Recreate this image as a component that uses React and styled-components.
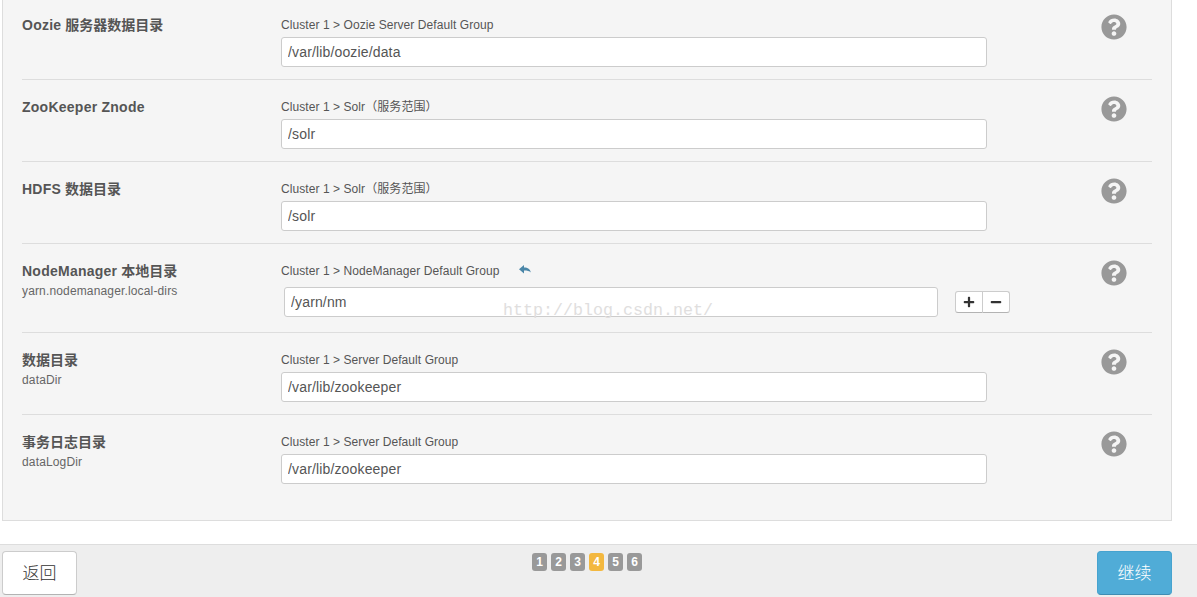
import React from "react";
import styled, { createGlobalStyle } from "styled-components";
import { FaQuestionCircle, FaPlus, FaMinus } from "react-icons/fa";

const GlobalStyle = createGlobalStyle`
  html, body {
    margin: 0;
    padding: 0;
    background: #fff;
    font-family: "Liberation Sans", "Noto Sans CJK SC", sans-serif;
    color: #555;
  }
`;

const Page = styled.div`
  position: relative;
  width: 1197px;
  height: 597px;
  overflow: hidden;
`;

const Panel = styled.div`
  box-sizing: border-box;
  width: 1170px;
  height: 521px;
  margin: 0 0 23px 2px;
  padding: 0 19px;
  background: #f5f5f5;
  border: 1px solid #ddd;
  border-top: none;
`;

const Row = styled.div`
  display: grid;
  grid-template-columns: 259px 820px 1fr;
  padding-top: ${(p) => (p.$first ? "15px" : "17px")};
  padding-bottom: 12px;
  border-bottom: ${(p) => (p.$last ? "none" : "1px solid #ddd")};
`;

const LabelCol = styled.div`
  line-height: 20px;
`;

const Label = styled.div`
  font-size: 14px;
  font-weight: bold;
  color: #555;
`;

const LatinPart = styled.span`
  letter-spacing: 0.25px;
`;

const SubLabel = styled.div`
  margin-top: 2px;
  font-size: 12px;
  line-height: 16px;
  letter-spacing: 0.15px;
  color: #666;
`;

const FieldCol = styled.div`
  min-width: 0;
`;

const Scope = styled.div`
  height: 20px;
  margin-bottom: 2px;
  font-size: 12px;
  line-height: 20px;
  letter-spacing: 0.07px;
  color: #555;
`;

const UndoIcon = styled.svg`
  display: inline-block;
  width: 12px;
  height: 10px;
  margin-left: 20px;
  vertical-align: 0;
  fill: #4a86a8;
`;

const TextInput = styled.input`
  display: block;
  box-sizing: border-box;
  width: ${(p) => p.$width}px;
  height: 30px;
  padding: 0 6px;
  background: #fff;
  border: 1px solid #ccc;
  border-radius: 3px;
  font-family: inherit;
  font-size: 14px;
  letter-spacing: 0.15px;
  color: #555;
  outline: none;
`;

const MultiField = styled.div`
  display: flex;
  align-items: center;
  padding: 4px 0 3px 3px;
`;

const ButtonGroup = styled.div`
  display: flex;
  margin-left: 17px;
`;

const SmallButton = styled.div`
  box-sizing: border-box;
  display: flex;
  align-items: center;
  justify-content: center;
  width: 28px;
  height: 22px;
  margin-left: ${(p) => (p.$left ? "0" : "-1px")};
  background: #fff;
  border: 1px solid #ccc;
  border-bottom-color: #b3b3b3;
  border-radius: ${(p) => (p.$left ? "3px 0 0 3px" : "0 3px 3px 0")};
  font-size: 12px;
  color: #333;
`;

const HelpIcon = styled(FaQuestionCircle)`
  display: block;
  margin-top: -1px;
  font-size: 26px;
  color: #999;
`;

const Footer = styled.div`
  box-sizing: border-box;
  display: flex;
  justify-content: space-between;
  align-items: flex-start;
  height: 53px;
  padding: 6px 25px 0 2px;
  background: #eee;
  border-top: 1px solid #ddd;
`;

const NavButton = styled.div`
  box-sizing: border-box;
  display: flex;
  align-items: center;
  justify-content: center;
  width: 75px;
  height: 44px;
  padding-bottom: 3px;
  background: ${(p) => (p.$primary ? "#50acd7" : "#fff")};
  border: 1px solid ${(p) => (p.$primary ? "#46a3cf" : "#ccc")};
  border-bottom-color: ${(p) => (p.$primary ? "#3f8db3" : "#b3b3b3")};
  border-radius: 4px;
  font-size: 17px;
  font-weight: 300;
  color: ${(p) => (p.$primary ? "#fff" : "#333")};
`;

const Stepper = styled.div`
  display: flex;
  gap: 4px;
  margin-top: 2px;
`;

const Step = styled.div`
  display: flex;
  align-items: center;
  justify-content: center;
  width: 15px;
  height: 18px;
  background: ${(p) => (p.$active ? "#f3b83f" : "#999")};
  border-radius: 3px;
  font-size: 12px;
  font-weight: bold;
  color: #fff;
`;

const Watermark = styled.div`
  position: absolute;
  left: 503px;
  top: 301px;
  font-family: "Liberation Mono", monospace;
  font-size: 16.67px;
  line-height: 20px;
  color: #e0dede;
  pointer-events: none;
`;

const rows = [
  { latin: "Oozie", label: " 服务器数据目录", group: "Oozie Server Default Group", value: "/var/lib/oozie/data" },
  { latin: "ZooKeeper Znode", group: "Solr（服务范围）", value: "/solr" },
  { latin: "HDFS", label: " 数据目录", group: "Solr（服务范围）", value: "/solr" },
  { latin: "NodeManager", label: " 本地目录", sub: "yarn.nodemanager.local-dirs", group: "NodeManager Default Group", value: "/yarn/nm", multi: true },
  { label: "数据目录", sub: "dataDir", group: "Server Default Group", value: "/var/lib/zookeeper" },
  { label: "事务日志目录", sub: "dataLogDir", group: "Server Default Group", value: "/var/lib/zookeeper" },
];

const App = () => {
  return (
    <Page>
      <GlobalStyle />
      <Panel>
        {rows.map((row, i) => (
          <Row key={i} $first={i === 0} $last={i === rows.length - 1}>
            <LabelCol>
              <Label>
                {row.latin && <LatinPart>{row.latin}</LatinPart>}
                {row.label}
              </Label>
              {row.sub && <SubLabel>{row.sub}</SubLabel>}
            </LabelCol>
            <FieldCol>
              <Scope>
                Cluster 1 &gt; {row.group}
                {row.multi && (
                  <UndoIcon viewBox="0 0 12 10">
                    <path d="M0 4.2 L5 0 V2.4 C9 2.4 11 4 12 7.6 C10.4 6 8.4 5.6 5 5.6 V8.4 Z" />
                  </UndoIcon>
                )}
              </Scope>
              {row.multi ? (
                <MultiField>
                  <TextInput $width={654} value={row.value} readOnly />
                  <ButtonGroup>
                    <SmallButton $left><FaPlus /></SmallButton>
                    <SmallButton><FaMinus /></SmallButton>
                  </ButtonGroup>
                </MultiField>
              ) : (
                <TextInput $width={706} value={row.value} readOnly />
              )}
            </FieldCol>
            <HelpIcon />
          </Row>
        ))}
      </Panel>
      <Footer>
        <NavButton>返回</NavButton>
        <Stepper>
          {[1, 2, 3, 4, 5, 6].map((n) => (
            <Step key={n} $active={n === 4}>{n}</Step>
          ))}
        </Stepper>
        <NavButton $primary>继续</NavButton>
      </Footer>
      <Watermark>http://blog.csdn.net/</Watermark>
    </Page>
  );
};

export default App;
